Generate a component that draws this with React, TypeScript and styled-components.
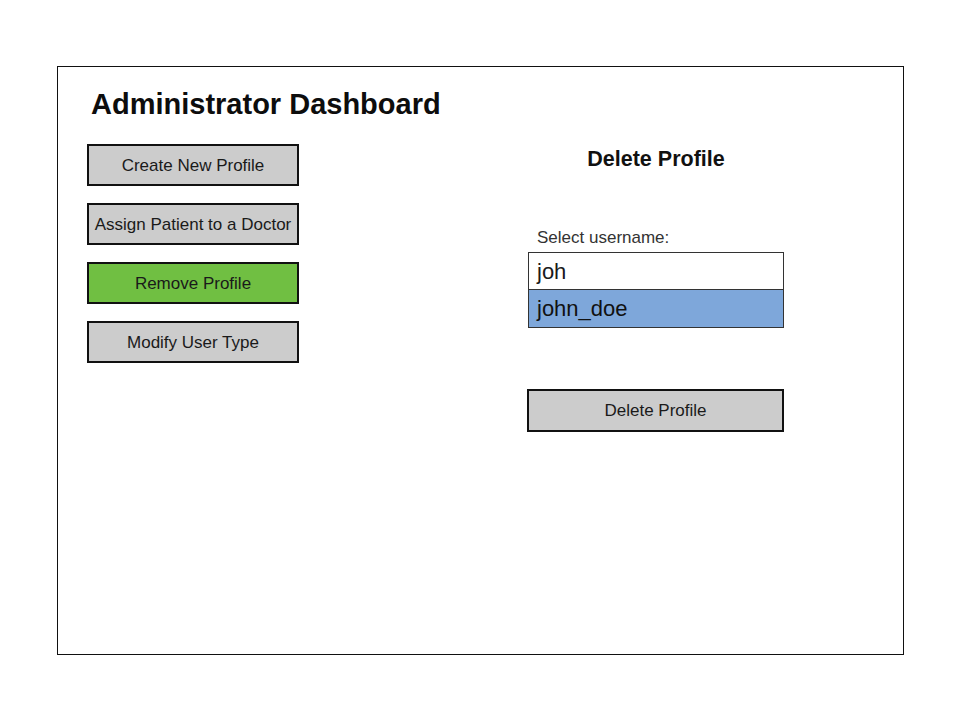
import React from "react";
import styled, { createGlobalStyle } from "styled-components";

const Global = createGlobalStyle`
  html, body { margin: 0; padding: 0; background: #ffffff; }
  body { font-family: "Liberation Sans", Arial, sans-serif; }
  * { box-sizing: border-box; }
`;

const Frame = styled.div`
  margin: 66px 0 0 57px;
  width: 847px;
  height: 589px;
  border: 1px solid #111;
  padding: 21px 0 0 29px;
  display: flex;
  flex-direction: column;
`;

const Title = styled.h1`
  margin: 0 0 23px 4px;
  font-size: 29px;
  line-height: 33px;
  font-weight: 700;
  color: #0d0d0d;
`;

const Body = styled.div`
  display: flex;
  gap: 228px;
  align-items: flex-start;
`;

const Menu = styled.nav`
  display: flex;
  flex-direction: column;
  gap: 17px;
  width: 212px;
`;

const MenuButton = styled.button<{ $active?: boolean }>`
  height: 42px;
  width: 100%;
  border: 2px solid #111;
  background: ${(p) => (p.$active ? "#70bf42" : "#cccccc")};
  font-family: "Liberation Sans", Arial, sans-serif;
  font-size: 17px;
  color: #1a1a1a;
  padding: 1px 0 0;
  white-space: nowrap;
`;

const Panel = styled.section`
  width: 257px;
  display: flex;
  flex-direction: column;
`;

const PanelTitle = styled.h2`
  margin: 3px 0 0 1px;
  text-align: center;
  font-size: 21.5px;
  line-height: 25px;
  font-weight: 700;
  color: #111;
`;

const Label = styled.label`
  margin: 56px 0 4px 10px;
  font-size: 17px;
  line-height: 20px;
  color: #333;
`;

const Combo = styled.div`
  width: 256px;
  margin-left: 1px;
  border: 1px solid #333;
  display: flex;
  flex-direction: column;
`;

const Input = styled.div`
  height: 37px;
  padding: 1px 0 0 8px;
  display: flex;
  align-items: center;
  font-size: 22px;
  color: #1a1a1a;
  background: #fff;
  border-bottom: 1px solid #333;
`;

const Option = styled.div`
  height: 37px;
  padding: 1px 0 0 8px;
  display: flex;
  align-items: center;
  font-size: 22px;
  color: #111;
  background: #7ea7da;
`;

const ActionButton = styled.button`
  margin-top: 61px;
  height: 43px;
  width: 257px;
  border: 2px solid #111;
  background: #cccccc;
  font-family: "Liberation Sans", Arial, sans-serif;
  font-size: 17px;
  color: #1a1a1a;
  padding: 0;
`;

const items = [
  "Create New Profile",
  "Assign Patient to a Doctor",
  "Remove Profile",
  "Modify User Type",
];

export default function App() {
  return (
    <>
      <Global />
      <Frame>
        <Title>Administrator Dashboard</Title>
        <Body>
          <Menu>
            {items.map((t) => (
              <MenuButton key={t} $active={t === "Remove Profile"}>
                {t}
              </MenuButton>
            ))}
          </Menu>
          <Panel>
            <PanelTitle>Delete Profile</PanelTitle>
            <Label>Select username:</Label>
            <Combo>
              <Input>joh</Input>
              <Option>john_doe</Option>
            </Combo>
            <ActionButton>Delete Profile</ActionButton>
          </Panel>
        </Body>
      </Frame>
    </>
  );
}
